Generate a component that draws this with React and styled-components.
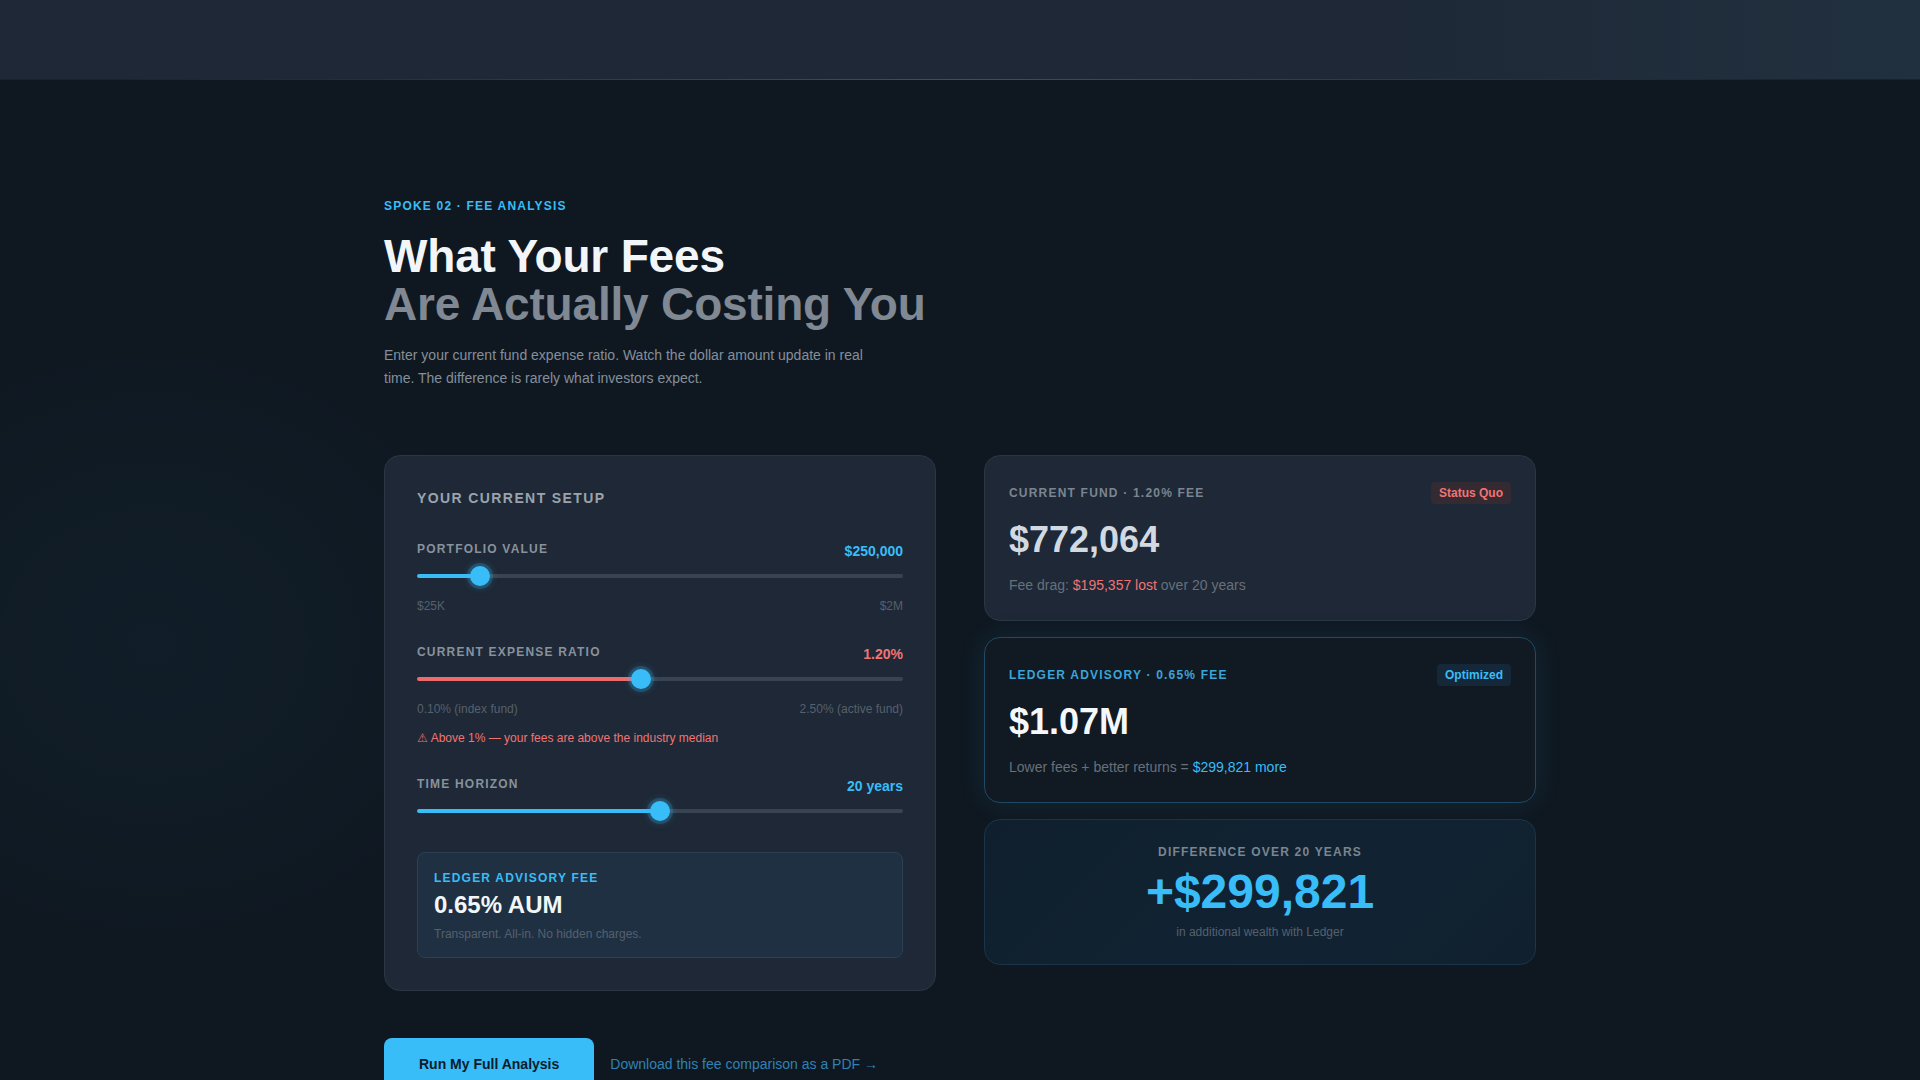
import React, { useState } from 'react';
import styled, { createGlobalStyle, css } from 'styled-components';

const colors = {
  page: '#0f1821',
  panel: '#1e2836',
  border: '#2b3644',
  sky: '#38bdf8',
  skyDim: '#3ba4d8',
  red: '#f07474',
  text: '#f3f6f9',
  muted: '#8a949f',
  dim: '#56606d',
  track: '#394452',
};

const GlobalStyle = createGlobalStyle`
  * { box-sizing: border-box; }
  body {
    margin: 0;
    background: ${colors.page};
    font-family: 'Liberation Sans', Arial, sans-serif;
    color: ${colors.text};
  }
`;

const Page = styled.div`
  min-height: 100vh;
  background:
    radial-gradient(ellipse 520px 460px at 8% 55%, rgba(56, 189, 248, 0.035), transparent 70%),
    ${colors.page};
`;

const TopBar = styled.header`
  position: relative;
  height: 80px;
  background: linear-gradient(90deg, #1e2836 0%, #1e2836 70%, #21303f 100%);
  border-bottom: 1px solid #17222e;

  &::after {
    content: '';
    position: absolute;
    left: 0;
    right: 0;
    bottom: -1px;
    height: 1px;
    background: linear-gradient(90deg, transparent 5%, rgba(56, 189, 248, 0.35) 50%, transparent 95%);
  }
`;

const Main = styled.main`
  max-width: 1152px;
  margin: 0 auto;
  padding: 117px 0 80px;
`;

const Eyebrow = styled.div`
  font-size: 12px;
  line-height: 18px;
  font-weight: 700;
  letter-spacing: 0.1em;
  text-transform: uppercase;
  color: ${colors.sky};
  margin-bottom: 17px;
`;

const Title = styled.h1`
  margin: 0;
  font-size: 46px;
  line-height: 48px;
  font-weight: 700;
  letter-spacing: -0.004em;
  color: ${colors.text};

  span {
    display: block;
    color: #7f8893;
  }
`;

const Lead = styled.p`
  margin: 16px 0 0;
  max-width: 490px;
  font-size: 14px;
  line-height: 23px;
  color: #858f9b;
`;

const Grid = styled.div`
  display: grid;
  grid-template-columns: 1fr 1fr;
  gap: 48px;
  margin-top: 65px;
  align-items: start;
`;

const Panel = styled.section`
  background: ${colors.panel};
  border: 1px solid ${colors.border};
  border-radius: 16px;
  padding: 32px;
`;

const PanelTitle = styled.h2`
  margin: 0 0 32px;
  font-size: 14px;
  line-height: 20px;
  font-weight: 700;
  letter-spacing: 0.1em;
  text-transform: uppercase;
  color: #9aa3ad;
`;

const Fields = styled.div`
  display: flex;
  flex-direction: column;
  gap: 28px;
`;

const FieldRow = styled.div`
  display: flex;
  justify-content: space-between;
  align-items: flex-start;
`;

const FieldLabel = styled.label`
  font-size: 12px;
  line-height: 18px;
  font-weight: 700;
  letter-spacing: 0.1em;
  text-transform: uppercase;
  color: #88929d;
`;

const FieldValue = styled.span`
  margin-top: 1px;
  font-size: 14px;
  line-height: 21px;
  font-weight: 700;
  color: ${(p) => (p.tone === 'red' ? colors.red : colors.sky)};
`;

const Range = styled.input.attrs({ type: 'range' })`
  display: block;
  width: 100%;
  height: 20px;
  margin: 4px 0 0;
  padding: 0;
  background: transparent;
  appearance: none;
  -webkit-appearance: none;
  cursor: pointer;

  &::-webkit-slider-runnable-track {
    height: 4px;
    border-radius: 2px;
    background: linear-gradient(
      to right,
      var(--fill-color) var(--fill),
      ${colors.track} var(--fill)
    );
  }

  &::-webkit-slider-thumb {
    -webkit-appearance: none;
    width: 20px;
    height: 20px;
    margin-top: -8px;
    border-radius: 50%;
    background: ${colors.sky};
    border: none;
    box-shadow: 0 0 0 3px rgba(56, 189, 248, 0.18), 0 0 10px rgba(56, 189, 248, 0.45);
  }

  &:focus {
    outline: none;
  }
`;

const Hints = styled.div`
  display: flex;
  justify-content: space-between;
  margin-top: 11px;
  font-size: 12px;
  line-height: 18px;
  color: ${colors.dim};
`;

const Warning = styled.div`
  margin-top: 11px;
  font-size: 12px;
  line-height: 18px;
  color: ${colors.red};
`;

const FeeBox = styled.div`
  margin-top: 31px;
  padding: 18px 16px 14px;
  background: #1f3043;
  border: 1px solid #2b3f55;
  border-radius: 8px;
`;

const FeeLabel = styled.div`
  font-size: 12px;
  line-height: 15px;
  font-weight: 700;
  letter-spacing: 0.1em;
  text-transform: uppercase;
  color: ${colors.sky};
`;

const FeeValue = styled.div`
  margin-top: 4px;
  font-size: 24px;
  line-height: 29px;
  font-weight: 700;
  color: ${colors.text};
`;

const FeeNote = styled.div`
  margin-top: 6px;
  font-size: 12px;
  line-height: 18px;
  color: ${colors.dim};
`;

const Results = styled.div`
  display: flex;
  flex-direction: column;
  gap: 16px;
`;

const variants = {
  current: css`
    background: ${colors.panel};
    border: 1px solid ${colors.border};
  `,
  ledger: css`
    background: #111922;
    border: 1px solid #1f4a63;
    box-shadow: 0 0 28px rgba(56, 189, 248, 0.1);
  `,
  diff: css`
    background: linear-gradient(135deg, #0f1f2d 0%, #112333 60%, #10202e 100%);
    border: 1px solid #1a3548;
    text-align: center;
    padding: 23px 24px;
  `,
};

const ResultCard = styled.div`
  border-radius: 16px;
  padding: 26px 24px 24px;
  ${(p) => variants[p.variant]}
`;

const CardHead = styled.div`
  display: flex;
  justify-content: space-between;
  align-items: center;
  min-height: 22px;
`;

const CardLabel = styled.div`
  font-size: 12px;
  line-height: 18px;
  font-weight: 700;
  letter-spacing: 0.1em;
  text-transform: uppercase;
  color: ${(p) => (p.tone === 'sky' ? colors.skyDim : '#7b8591')};
`;

const Badge = styled.span`
  padding: 3px 8px;
  border-radius: 4px;
  font-size: 12px;
  line-height: 16px;
  font-weight: 700;
  ${(p) =>
    p.tone === 'red'
      ? css`
          background: #342a31;
          color: ${colors.red};
        `
      : css`
          background: #15283a;
          color: ${colors.sky};
        `}
`;

const Amount = styled.div`
  margin-top: 14px;
  font-size: 36px;
  line-height: 43px;
  font-weight: 700;
  color: ${(p) => (p.bright ? '#f5f8fb' : '#d3d9e0')};
`;

const CardNote = styled.div`
  margin-top: 14px;
  font-size: 14px;
  line-height: 21px;
  color: #66707c;

  em {
    font-style: normal;
    color: ${(p) => (p.tone === 'sky' ? colors.sky : colors.red)};
  }
`;

const DiffAmount = styled.div`
  margin-top: 7px;
  font-size: 48px;
  line-height: 48px;
  font-weight: 700;
  color: ${colors.sky};
`;

const DiffNote = styled.div`
  margin-top: 7px;
  font-size: 12px;
  line-height: 18px;
  color: ${colors.dim};
`;

const Actions = styled.div`
  display: flex;
  align-items: center;
  gap: 16px;
  margin-top: 47px;
`;

const PrimaryButton = styled.button`
  padding: 16px 35px;
  border: none;
  border-radius: 8px;
  background: ${colors.sky};
  color: #0d1b2a;
  font-family: inherit;
  font-size: 14px;
  line-height: 20px;
  font-weight: 700;
  cursor: pointer;
`;

const TextLink = styled.a`
  font-size: 14px;
  color: #2f82b3;
  text-decoration: none;
  cursor: pointer;
`;

const GROSS_RETURN = 0.07;
const LEDGER_GROSS = 0.082;
const LEDGER_FEE = 0.0065;

const money = (v) => '$' + Math.round(v).toLocaleString('en-US');
const short = (v) => (v >= 1e6 ? '$' + (v / 1e6).toFixed(2) + 'M' : money(v));
const pct = (lo, hi, v) => ((v - lo) / (hi - lo)) * 100;

const App = () => {
  const [portfolio, setPortfolio] = useState(250000);
  const [ratio, setRatio] = useState(1.2);
  const [years, setYears] = useState(20);

  const noFee = portfolio * Math.pow(1 + GROSS_RETURN, years);
  const current = portfolio * Math.pow(1 + GROSS_RETURN - ratio / 100, years);
  const ledger = portfolio * Math.pow(1 + LEDGER_GROSS - LEDGER_FEE, years);
  const diff = ledger - current;

  return (
    <Page>
      <GlobalStyle />
      <TopBar />
      <Main>
        <Eyebrow>Spoke 02 · Fee Analysis</Eyebrow>
        <Title>
          What Your Fees
          <span>Are Actually Costing You</span>
        </Title>
        <Lead>
          Enter your current fund expense ratio. Watch the dollar amount update in real time. The
          difference is rarely what investors expect.
        </Lead>

        <Grid>
          <Panel>
            <PanelTitle>Your Current Setup</PanelTitle>
            <Fields>
              <div>
                <FieldRow>
                  <FieldLabel>Portfolio Value</FieldLabel>
                  <FieldValue>{money(portfolio)}</FieldValue>
                </FieldRow>
                <Range
                  min={25000}
                  max={2000000}
                  step={5000}
                  value={portfolio}
                  onChange={(e) => setPortfolio(Number(e.target.value))}
                  style={{ '--fill': `${pct(25000, 2000000, portfolio)}%`, '--fill-color': colors.sky }}
                />
                <Hints>
                  <span>$25K</span>
                  <span>$2M</span>
                </Hints>
              </div>

              <div>
                <FieldRow>
                  <FieldLabel>Current Expense Ratio</FieldLabel>
                  <FieldValue tone="red">{ratio.toFixed(2)}%</FieldValue>
                </FieldRow>
                <Range
                  min={0.1}
                  max={2.5}
                  step={0.05}
                  value={ratio}
                  onChange={(e) => setRatio(Number(e.target.value))}
                  style={{ '--fill': `${pct(0.1, 2.5, ratio)}%`, '--fill-color': '#ee6b6b' }}
                />
                <Hints>
                  <span>0.10% (index fund)</span>
                  <span>2.50% (active fund)</span>
                </Hints>
                {ratio > 1 && <Warning>⚠ Above 1% — your fees are above the industry median</Warning>}
              </div>

              <div>
                <FieldRow>
                  <FieldLabel>Time Horizon</FieldLabel>
                  <FieldValue>{years} years</FieldValue>
                </FieldRow>
                <Range
                  min={5}
                  max={35}
                  step={1}
                  value={years}
                  onChange={(e) => setYears(Number(e.target.value))}
                  style={{ '--fill': `${pct(5, 35, years)}%`, '--fill-color': colors.sky }}
                />
              </div>
            </Fields>

            <FeeBox>
              <FeeLabel>Ledger Advisory Fee</FeeLabel>
              <FeeValue>0.65% AUM</FeeValue>
              <FeeNote>Transparent. All-in. No hidden charges.</FeeNote>
            </FeeBox>
          </Panel>

          <Results>
            <ResultCard variant="current">
              <CardHead>
                <CardLabel>Current Fund · {ratio.toFixed(2)}% Fee</CardLabel>
                <Badge tone="red">Status Quo</Badge>
              </CardHead>
              <Amount>{short(current)}</Amount>
              <CardNote>
                Fee drag: <em>{money(noFee - current)} lost</em> over {years} years
              </CardNote>
            </ResultCard>

            <ResultCard variant="ledger">
              <CardHead>
                <CardLabel tone="sky">Ledger Advisory · 0.65% Fee</CardLabel>
                <Badge tone="sky">Optimized</Badge>
              </CardHead>
              <Amount bright>{short(ledger)}</Amount>
              <CardNote tone="sky">
                Lower fees + better returns = <em>{money(diff)} more</em>
              </CardNote>
            </ResultCard>

            <ResultCard variant="diff">
              <CardLabel>Difference Over {years} Years</CardLabel>
              <DiffAmount>
                {diff >= 0 ? '+' : '-'}
                {money(Math.abs(diff))}
              </DiffAmount>
              <DiffNote>in additional wealth with Ledger</DiffNote>
            </ResultCard>
          </Results>
        </Grid>

        <Actions>
          <PrimaryButton>Run My Full Analysis</PrimaryButton>
          <TextLink>Download this fee comparison as a PDF →</TextLink>
        </Actions>
      </Main>
    </Page>
  );
};

export default App;
